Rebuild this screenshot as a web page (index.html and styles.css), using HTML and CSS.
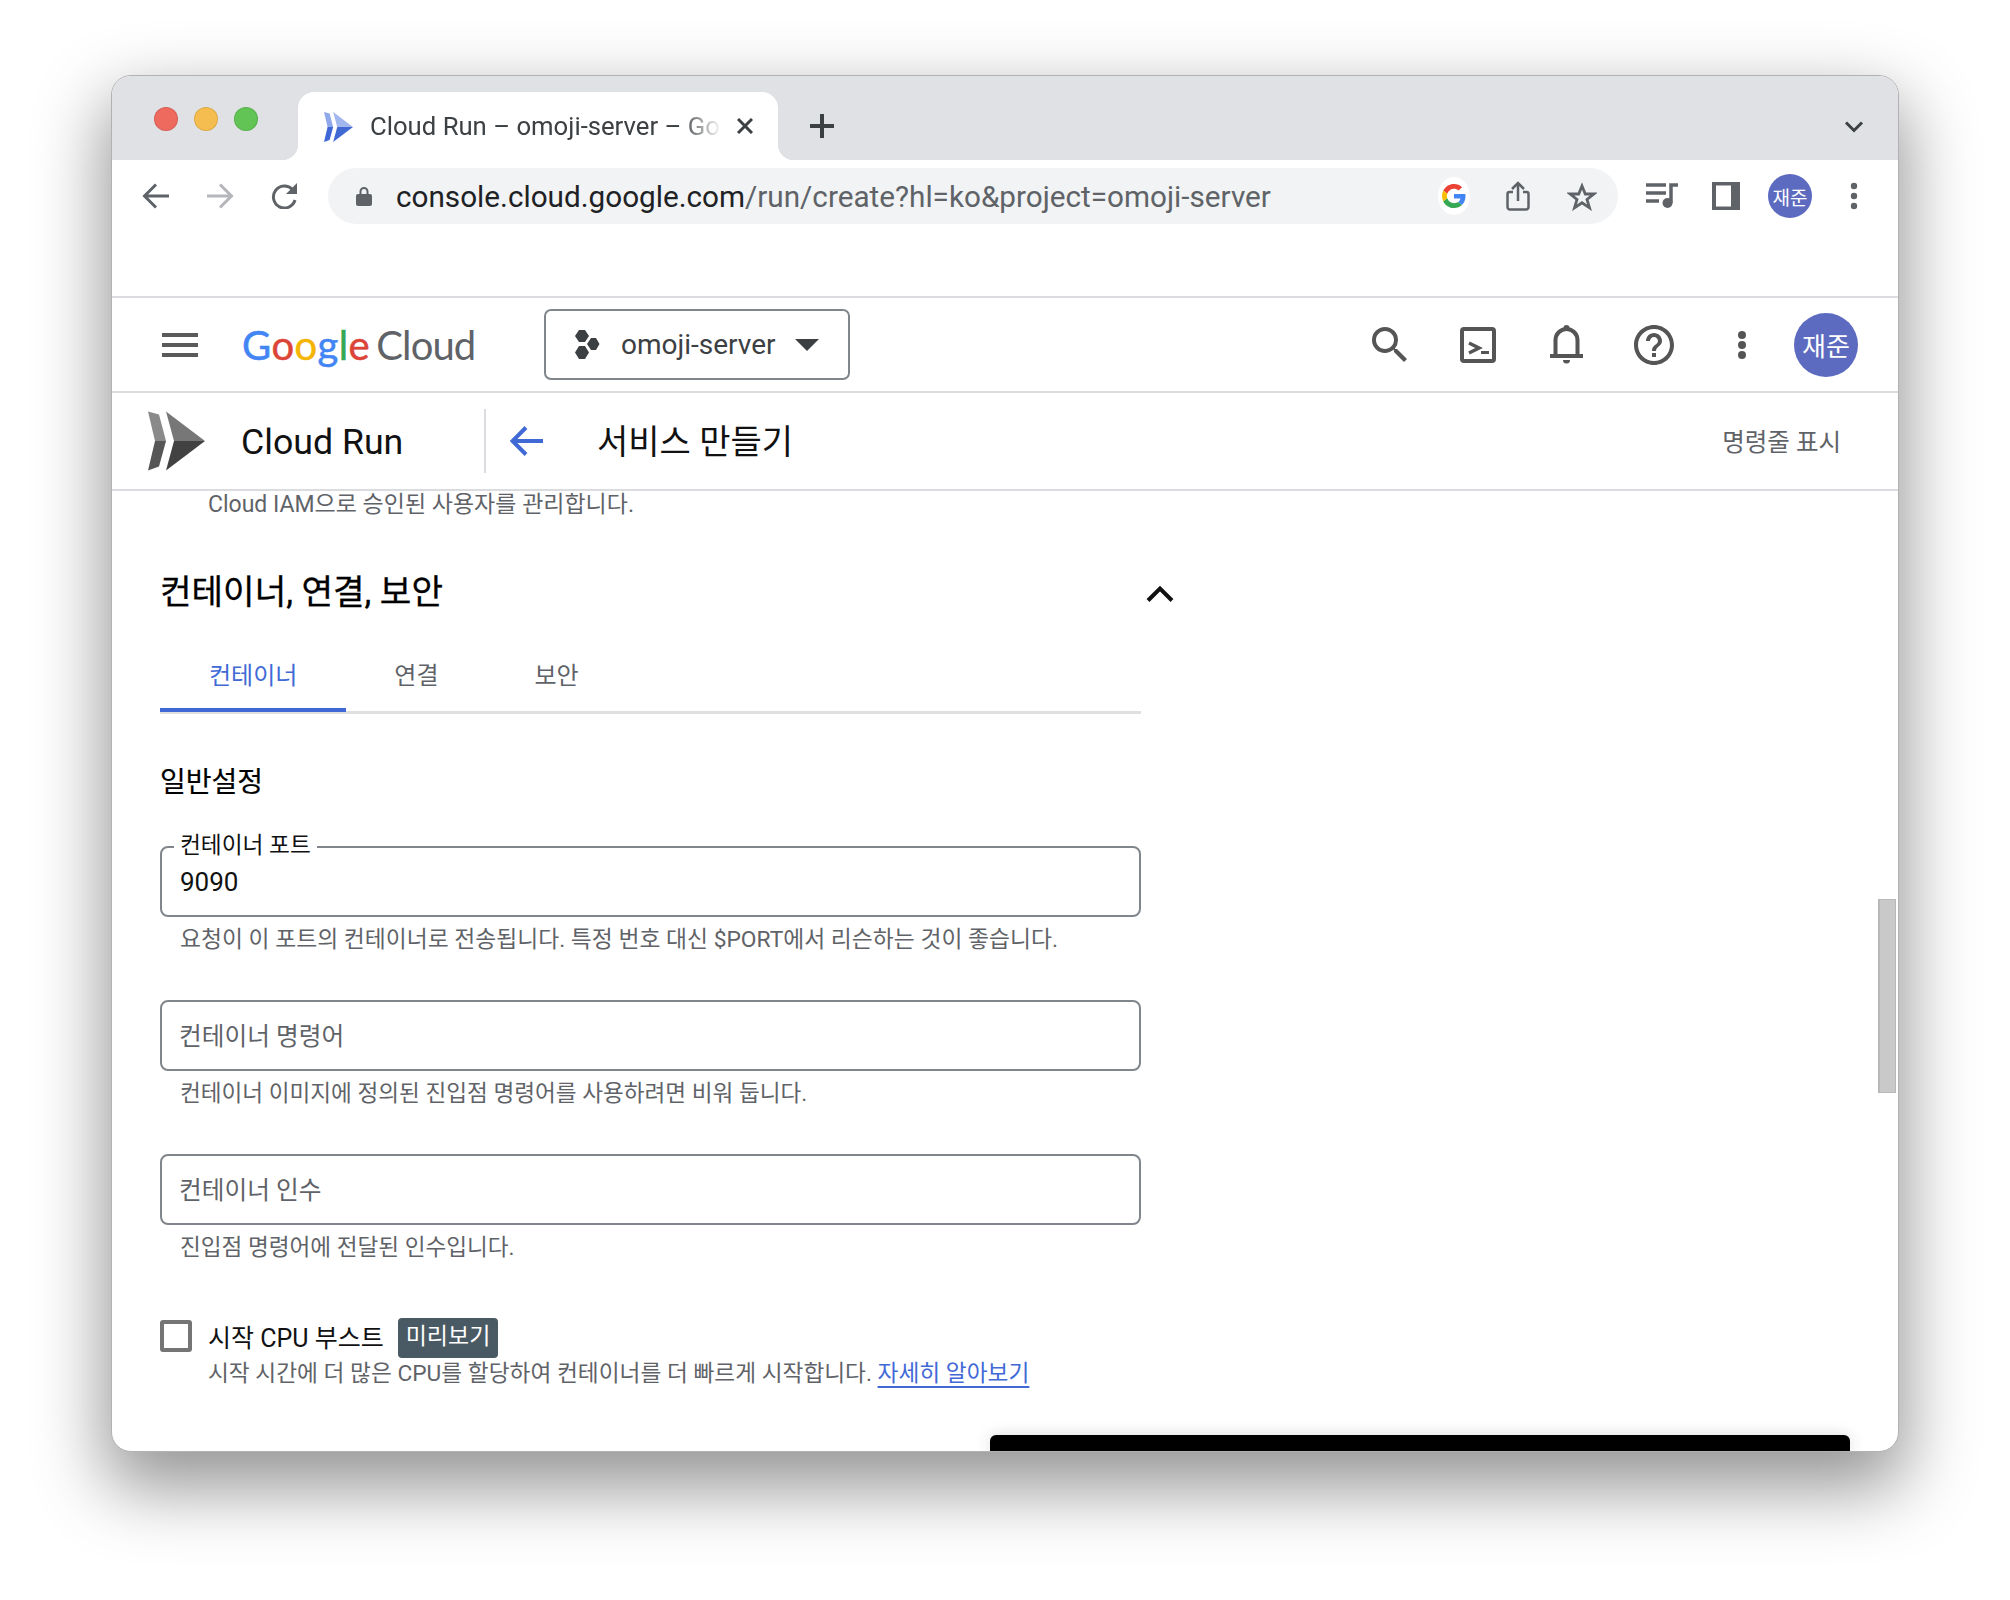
FILE: index.html
```html
<!DOCTYPE html>
<html lang="ko">
<head>
<meta charset="utf-8">
<title>Cloud Run – omoji-server</title>
<link rel="stylesheet" href="styles.css">
</head>
<body>
<div class="window">
  <div class="tabstrip">
    <div class="lights"><span class="light red"></span><span class="light yellow"></span><span class="light green"></span></div>
    <div class="tab">
      <svg class="favicon" width="29" height="30" viewBox="0 0 57 59"><path fill="#8fa8ea" d="M0 0l11 3 7 26.500H7z"/><path fill="#3f68d6" d="M0 59l11-4 7-25.500H7z"/><path fill="#a3b7ef" d="M18 0l39 29.500H26z"/><path fill="#4069d4" d="M18 59l39-29.500H26z"/></svg>
      <span class="tab-title">Cloud Run – omoji-server – Google Cloud</span>
      <svg class="tab-close" width="16" height="16" viewBox="0 0 16 16"><path d="M1 1l14 14M15 1L1 15" stroke="#3c4043" stroke-width="3" fill="none"/></svg>
    </div>
    <svg class="new-tab" width="24" height="24" viewBox="0 0 24 24"><path d="M12 0v24M0 12h24" stroke="#3c4043" stroke-width="4"/></svg>
    <svg class="tab-menu" width="20" height="12" viewBox="0 0 20 12"><path d="M2 1.500l8 8 8-8" stroke="#3c4043" stroke-width="3" fill="none"/></svg>
  </div>

  <div class="toolbar">
    <span class="tb-btn"><svg width="28" height="26" viewBox="0 0 28 26"><path d="M27 13H3M14 1.500L2.500 13 14 24.500" stroke="#5f6368" stroke-width="3" fill="none"/></svg></span>
    <span class="tb-btn"><svg width="28" height="26" viewBox="0 0 28 26"><path d="M1 13h24M14 1.500L25.500 13 14 24.500" stroke="#b4b6b9" stroke-width="3" fill="none"/></svg></span>
    <span class="tb-btn"><svg width="28" height="26" viewBox="0 0 28 26"><path d="M22.500 6.500A11 11 0 1 0 25 17" stroke="#5f6368" stroke-width="3" fill="none"/><path d="M27 0v11H16z" fill="#5f6368"/></svg></span>
    <div class="omnibox">
      <svg class="lock" width="16" height="20" viewBox="0 0 16 20"><path d="M4.500 9V5.500a3.500 3.500 0 0 1 7 0V9" stroke="#5f6368" stroke-width="2" fill="none"/><rect y="8" width="16" height="12" rx="2" fill="#5f6368"/></svg>
      <span class="url"><span class="url-host">console.cloud.google.com</span>/run/create?hl=ko&amp;project=omoji-server</span>
      <span class="omni-btn"><span class="g-badge"><svg width="24" height="24" viewBox="0 0 48 48"><path fill="#EA4335" d="M24 9.500c3.540 0 6.710 1.220 9.210 3.600l6.850-6.850C35.900 2.380 30.470 0 24 0 14.620 0 6.510 5.380 2.560 13.220l7.980 6.190C12.430 13.720 17.740 9.500 24 9.500z"/><path fill="#4285F4" d="M46.980 24.550c0-1.570-.15-3.090-.38-4.550H24v9.020h12.940c-.58 2.960-2.260 5.480-4.780 7.180l7.730 6c4.510-4.180 7.090-10.360 7.090-17.650z"/><path fill="#FBBC05" d="M10.530 28.590c-.48-1.450-.76-2.990-.76-4.590s.27-3.140.76-4.590l-7.980-6.190C.92 16.460 0 20.120 0 24c0 3.880.92 7.540 2.560 10.780l7.970-6.190z"/><path fill="#34A853" d="M24 48c6.480 0 11.930-2.130 15.890-5.810l-7.730-6c-2.150 1.450-4.920 2.300-8.160 2.300-6.260 0-11.570-4.220-13.470-9.910l-7.980 6.190C6.510 42.620 14.620 48 24 48z"/></svg></span></span>
      <span class="omni-btn"><svg width="24" height="30" viewBox="0 0 24 30"><path d="M12 20V2M6 8l6-6 6 6" stroke="#5f6368" stroke-width="2.500" fill="none"/><path d="M7 11H3.500a2 2 0 0 0-2 2v13a2.500 2.500 0 0 0 2.500 2.500h16a2.500 2.500 0 0 0 2.500-2.500V13a2 2 0 0 0-2-2H17" stroke="#5f6368" stroke-width="2.500" fill="none"/></svg></span>
      <span class="omni-btn"><svg width="30" height="29" viewBox="0 0 30 29"><path d="M15 4l3.300 8h8.500l-6.800 5.400 2.500 8.400L15 20.800l-7.500 5 2.500-8.400L3.200 12h8.500z" stroke="#5f6368" stroke-width="2.800" fill="none" stroke-linejoin="miter"/></svg></span>
    </div>
    <span class="tb-btn tb-first"><svg width="32" height="26" viewBox="0 0 32 26"><path d="M0 2h20M0 10h20M0 18h13" stroke="#5f6368" stroke-width="3.500"/><path d="M25 20V2h7" stroke="#5f6368" stroke-width="3.500" fill="none"/><circle cx="21.500" cy="20" r="5" fill="#5f6368"/></svg></span>
    <span class="tb-btn"><svg width="28" height="28" viewBox="0 0 28 28"><path fill="#5f6368" d="M0 0h28v28H0z"/><path fill="#fff" d="M4 3.500h15v21H4z"/></svg></span>
    <span class="tb-btn"><span class="avatar-small">재준</span></span>
    <span class="tb-btn"><svg width="8" height="28" viewBox="0 0 8 28"><circle cx="4" cy="4" r="3.200" fill="#5f6368"/><circle cx="4" cy="14" r="3.200" fill="#5f6368"/><circle cx="4" cy="24" r="3.200" fill="#5f6368"/></svg></span>
  </div>

  <header class="gc-header">
    <svg class="hamburger" width="36" height="24" viewBox="0 0 36 24"><path d="M0 2h36M0 12h36M0 22h36" stroke="#5a5a5a" stroke-width="4"/></svg>
    <div class="gc-logo"><span class="g-word"><span class="g-blue">G</span><span class="g-red">o</span><span class="g-yellow">o</span><span class="g-blue">g</span><span class="g-green">l</span><span class="g-red">e</span></span> <span class="g-cloud">Cloud</span></div>
    <div class="project">
      <svg width="26" height="30" viewBox="0 0 26 30"><path fill="#3c4043" d="M5 0h6l4 6-4 6H5L1 6zM17 8h5l3.500 6-3.500 6h-5l-4-6zM5 16h6l4 6.500-4 6.500H5l-4-6.500z"/></svg>
      <span class="project-name">omoji-server</span>
      <svg width="24" height="12" viewBox="0 0 24 12"><path fill="#3c4043" d="M0 0h24L12 12z"/></svg>
    </div>
    <div class="gc-actions">
      <span class="gc-btn"><svg width="48" height="48" viewBox="0 0 24 24"><path fill="#555" d="M15.500 14h-.79l-.28-.27A6.471 6.471 0 0 0 16 9.500 6.500 6.500 0 1 0 9.500 16c1.610 0 3.090-.59 4.230-1.570l.27.28v.79l5 4.990L20.490 19l-4.990-5zm-6 0C7.010 14 5 11.990 5 9.500S7.010 5 9.500 5 14 7.010 14 9.500 11.990 14 9.500 14z"/></svg></span>
      <span class="gc-btn"><svg width="36" height="36" viewBox="0 0 36 36"><rect x="2" y="2" width="32" height="32" rx="2" stroke="#555" stroke-width="4" fill="none"/><path d="M9 16l10 5-10 5" stroke="#555" stroke-width="3.500" fill="none"/><path fill="#555" d="M21 24h8v3h-8z"/></svg></span>
      <span class="gc-btn"><svg width="33" height="39" viewBox="0 0 33 39"><circle cx="16.500" cy="3" r="3" fill="#555"/><path d="M5.500 31V15a11 11 0 0 1 22 0v16" stroke="#555" stroke-width="4" fill="none"/><path fill="#555" d="M0 29h33v4H0zM13 35h7a3.500 3.500 0 0 1-7 0z"/></svg></span>
      <span class="gc-btn"><svg width="48" height="48" viewBox="0 0 24 24"><path fill="#555" d="M11 18h2v-2h-2v2zm1-16C6.480 2 2 6.480 2 12s4.480 10 10 10 10-4.480 10-10S17.520 2 12 2zm0 18c-4.410 0-8-3.590-8-8s3.590-8 8-8 8 3.590 8 8-3.590 8-8 8zm0-14c-2.210 0-4 1.790-4 4h2c0-1.100.9-2 2-2s2 .9 2 2c0 2-3 1.750-3 5h2c0-2.250 3-2.500 3-5 0-2.210-1.790-4-4-4z"/></svg></span>
      <span class="gc-btn"><svg width="8" height="28" viewBox="0 0 8 28"><circle cx="4" cy="4" r="4" fill="#555"/><circle cx="4" cy="14" r="4" fill="#555"/><circle cx="4" cy="24" r="4" fill="#555"/></svg></span>
      <span class="avatar-large">재준</span>
    </div>
  </header>

  <div class="subheader">
    <div class="product">
      <svg width="57" height="60" viewBox="0 0 57 59"><path fill="#8a8a8a" d="M0 0l11 3 7 26.500H7z"/><path fill="#565656" d="M0 59l11-4 7-25.500H7z"/><path fill="#777" d="M18 0l39 29.500H26z"/><path fill="#424242" d="M18 59l39-29.500H26z"/></svg>
      <span class="product-name">Cloud Run</span>
    </div>
    <svg class="back-blue" width="33" height="30" viewBox="0 0 33 30"><path d="M33 15H4M16 1.500L2.500 15 16 28.500" stroke="#4169d6" stroke-width="4" fill="none"/></svg>
    <h1 class="page-title">서비스 만들기</h1>
    <span class="show-cli">명령줄 표시</span>
  </div>

  <main class="content">
    <p class="iam-note">Cloud IAM으로 승인된 사용자를 관리합니다.</p>
    <div class="section-head">
      <h2 class="section-title">컨테이너, 연결, 보안</h2>
      <svg class="section-chevron" width="32" height="18" viewBox="0 0 32 18"><path d="M4 15.500L16 3.500l12 12" stroke="#111" stroke-width="4" fill="none"/></svg>
    </div>
    <nav class="tabs">
      <span class="tab-item active">컨테이너</span>
      <span class="tab-item">연결</span>
      <span class="tab-item">보안</span>
    </nav>
    <h3 class="general">일반설정</h3>

    <div class="group">
      <div class="field"><span class="field-label">컨테이너 포트</span><span class="field-value">9090</span></div>
      <p class="helper helper-wide">요청이 이 포트의 컨테이너로 전송됩니다. 특정 번호 대신 $PORT에서 리슨하는 것이 좋습니다.</p>
    </div>
    <div class="group">
      <div class="field"><span class="field-placeholder">컨테이너 명령어</span></div>
      <p class="helper">컨테이너 이미지에 정의된 진입점 명령어를 사용하려면 비워 둡니다.</p>
    </div>
    <div class="group">
      <div class="field"><span class="field-placeholder">컨테이너 인수</span></div>
      <p class="helper">진입점 명령어에 전달된 인수입니다.</p>
    </div>

    <div class="check-row">
      <span class="checkbox"></span>
      <span class="check-label">시작 CPU 부스트</span>
      <span class="badge">미리보기</span>
    </div>
    <p class="check-desc">시작 시간에 더 많은 CPU를 할당하여 컨테이너를 더 빠르게 시작합니다. <a class="learn" href="#">자세히 알아보기</a></p>

    <div class="scrollbar"></div>
    <div class="black-bar"></div>
  </main>
</div>
</body>
</html>
```
FILE: styles.css
```css
* { box-sizing: border-box; }
html, body { margin: 0; padding: 0; }
body {
  width: 2010px;
  height: 1600px;
  background: #fff;
  padding: 75px 0 0 111px;
  overflow: hidden;
  font-family: Roboto, "Noto Sans CJK KR", sans-serif;
  color: #202124;
}
p, h1, h2, h3 { margin: 0; font-weight: 400; }

.window {
  width: 1788px;
  height: 1377px;
  border: 1px solid #b2b2b2;
  border-radius: 20px;
  background: #fff;
  display: flex;
  flex-direction: column;
  overflow: hidden;
  box-shadow: 0 30px 70px 6px rgba(0,0,0,.42);
}

/* tab strip */
.tabstrip {
  height: 84px;
  flex: none;
  background: #dfe1e5;
  display: flex;
  padding-left: 42px;
  padding-right: 34px;
}
.lights { display: flex; gap: 16px; padding-top: 31px; }
.light { width: 24px; height: 24px; border-radius: 50%; border: 1px solid rgba(0,0,0,.1); }
.red { background: #ee6a5f; }
.yellow { background: #f5bd4f; }
.green { background: #61c454; }

.tab {
  position: relative;
  margin: 16px 0 0 40px;
  width: 480px;
  height: 68px;
  background: #fff;
  border-radius: 16px 16px 0 0;
  display: flex;
  align-items: center;
  padding: 0 0 0 26px;
}
.tab::before, .tab::after {
  content: "";
  position: absolute;
  bottom: 0;
  width: 16px;
  height: 16px;
}
.tab::before { left: -16px; background: radial-gradient(circle at 0 0, transparent 16px, #fff 16.500px); }
.tab::after { right: -16px; background: radial-gradient(circle at 100% 0, transparent 16px, #fff 16.500px); }
.favicon { flex: none; margin-top: 2px; }
.tab-title {
  margin-left: 17px;
  width: 352px;
  flex: none;
  font-size: 25.700px;
  line-height: 32px;
  color: #3c4043;
  white-space: nowrap;
  overflow: hidden;
  -webkit-mask-image: linear-gradient(to right, #000 88%, transparent 100%);
  mask-image: linear-gradient(to right, #000 88%, transparent 100%);
}
.tab-close { flex: none; margin-left: 15px; }
.new-tab { flex: none; margin: 38px 0 0 32px; }
.tab-menu { flex: none; margin: 45px 0 0 auto; }

/* toolbar */
.toolbar {
  height: 136px;
  flex: none;
  display: flex;
  align-items: flex-start;
  padding: 8px 0 0 12px;
}
.tb-btn {
  width: 64px;
  height: 56px;
  flex: none;
  display: flex;
  align-items: center;
  justify-content: center;
}
.omnibox {
  width: 1290px;
  height: 56px;
  flex: none;
  margin: 0 12px;
  padding: 0 4px 0 28px;
  border-radius: 28px;
  background: #f1f3f4;
  display: flex;
  align-items: center;
}
.lock { flex: none; }
.url {
  flex: 1;
  margin-left: 24px;
  font-size: 29.700px;
  color: #5f6368;
  white-space: nowrap;
}
.url-host { color: #202124; }
.omni-btn {
  width: 64px;
  height: 56px;
  flex: none;
  display: flex;
  align-items: center;
  justify-content: center;
}
.g-badge {
  width: 32px;
  height: 38px;
  border-radius: 50%;
  background: #fff;
  display: flex;
  align-items: center;
  justify-content: center;
}
.avatar-small {
  width: 44px;
  height: 44px;
  border-radius: 50%;
  background: #5c6bc0;
  color: #fff;
  font-size: 19px;
  display: flex;
  align-items: center;
  justify-content: center;
}

/* console header */
.gc-header {
  height: 97px;
  flex: none;
  border-top: 2px solid #dadce0;
  border-bottom: 2px solid #dadce0;
  display: flex;
  align-items: center;
  padding: 0 40px 0 50px;
}
.hamburger { flex: none; }
.gc-logo {
  margin-left: 44px;
  width: 251px;
  font-family: Lato, sans-serif;
  font-size: 40px;
  word-spacing: -4px;
  white-space: nowrap;
}
.g-word { letter-spacing: 0.400px; -webkit-text-stroke: 0.500px currentColor; }
.g-blue { color: #4285f4; }
.g-red { color: #db4437; }
.g-yellow { color: #f4b400; }
.g-green { color: #34a853; }
.g-cloud { color: #5f6368; letter-spacing: -0.900px; }
.project {
  margin-left: 51px;
  width: 306px;
  height: 71px;
  border: 2px solid #80868b;
  border-radius: 7px;
  display: flex;
  align-items: center;
  padding-left: 28px;
  flex: none;
}
.project-name {
  margin: 0 19px 0 21px;
  font-size: 28px;
  color: #3c4043;
  white-space: nowrap;
}
.gc-actions { margin-left: auto; display: flex; align-items: center; }
.gc-btn {
  width: 88px;
  height: 64px;
  display: flex;
  align-items: center;
  justify-content: center;
}
.avatar-large {
  width: 64px;
  height: 64px;
  margin-left: 8px;
  border-radius: 50%;
  background: #5c6bc0;
  color: #fff;
  font-size: 26px;
  display: flex;
  align-items: center;
  justify-content: center;
}

/* product bar */
.subheader {
  height: 98px;
  flex: none;
  border-bottom: 2px solid #dadce0;
  display: flex;
  align-items: center;
  padding: 0 57px 0 36px;
}
.product {
  width: 338px;
  height: 64px;
  flex: none;
  border-right: 2px solid #dadce0;
  display: flex;
  align-items: center;
  margin-right: 24px;
}
.product-name {
  margin-left: 36px;
  margin-top: 2px;
  font-size: 35.700px;
  color: #111;
  white-space: nowrap;
}
.back-blue { flex: none; }
.page-title {
  margin-left: 54px;
  margin-bottom: 4px;
  font-size: 34px;
  color: #111;
  white-space: nowrap;
}
.show-cli {
  margin-left: auto;
  margin-bottom: 2px;
  font-size: 24.500px;
  color: #5f6368;
  white-space: nowrap;
}

/* content */
.content {
  flex: 1;
  position: relative;
  padding-left: 48px;
}
.iam-note {
  margin-left: 48px;
  padding-top: 1px;
  font-size: 23px;
  line-height: 25px;
  color: #5f6368;
}
.section-head {
  margin-top: 51px;
  width: 1016px;
  height: 48px;
  display: flex;
  align-items: center;
  justify-content: space-between;
}
.section-title { font-size: 34.300px; line-height: 48px; color: #000; -webkit-text-stroke: 0.300px #000; }
.section-chevron { margin-top: 3px; }
.tabs {
  width: 981px;
  height: 98px;
  border-bottom: 3px solid #e0e0e0;
  display: flex;
  align-items: flex-start;
}
.tab-item {
  height: 96px;
  padding: 44px 49px 0;
  font-size: 24px;
  line-height: 32px;
  color: #5f6368;
  border-bottom: 4px solid transparent;
}
.tab-item + .tab-item { padding: 44px 48px 0; }
.tab-item.active { color: #4169d6; border-bottom-color: #4169d6; }
.general {
  margin-top: 51px;
  font-size: 28px;
  line-height: 36px;
  color: #000;
  -webkit-text-stroke: 0.200px #000;
}
.group { margin-top: 45px; width: 981px; }
.group + .group { margin-top: 44px; }
.field {
  position: relative;
  height: 71px;
  border: 2px solid #80868b;
  border-radius: 8px;
  display: flex;
  align-items: center;
  padding-left: 17px;
}
.field-label {
  position: absolute;
  top: -14px;
  left: 12px;
  padding: 0 6px;
  background: #fff;
  font-size: 22.700px;
  line-height: 24px;
  color: #111;
}
.field-value { margin-left: 1px; font-size: 26px; color: #111; }
.field-placeholder { margin-bottom: 3px; font-size: 24.700px; color: #5f6368; }
.helper {
  margin: 7px 0 0 20px;
  font-size: 22.600px;
  line-height: 32px;
  color: #5f6368;
}
.helper-wide { font-size: 22.800px; }
.check-row {
  margin-top: 54px;
  display: flex;
  align-items: center;
  height: 40px;
}
.checkbox {
  width: 32px;
  height: 32px;
  border: 4px solid #757575;
  border-radius: 3px;
  margin-right: 16px;
  margin-bottom: 4px;
  flex: none;
}
.check-label { font-size: 25px; color: #111; margin-bottom: 4px; }
.badge {
  margin-left: 14px;
  height: 40px;
  padding: 0 8px;
  border-radius: 4px;
  background: #4a5a64;
  color: #fff;
  font-size: 23px;
  line-height: 38px;
}
.check-desc {
  margin: 0 0 0 48px;
  font-size: 22.700px;
  line-height: 32px;
  color: #5f6368;
}
.learn {
  color: #4169d6;
  text-decoration: underline;
  text-decoration-thickness: 2px;
  text-underline-offset: 5px;
}
.scrollbar {
  position: absolute;
  right: 2px;
  top: 408px;
  width: 18px;
  height: 194px;
  background: #c9c9c9;
  border: 1px solid #b8b8b8;
  border-left-width: 2px;
}
.black-bar {
  position: absolute;
  left: 878px;
  right: 48px;
  bottom: 0;
  height: 16px;
  background: #000;
  border-radius: 6px 6px 0 0;
  box-shadow: 0 0 16px rgba(0,0,0,.15);
}
```
